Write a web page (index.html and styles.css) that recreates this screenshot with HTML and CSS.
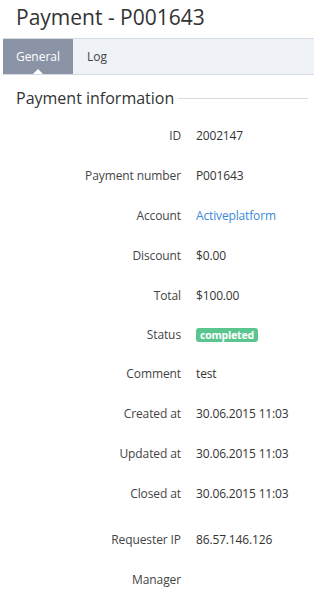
FILE: index.html
```html
<!DOCTYPE html>
<html>
<head>
<meta charset="utf-8">
<link rel="stylesheet" href="styles.css">
</head>
<body>
<h1 class="title">Payment - P001643</h1>

<div class="tabs">
    <div class="tab active">General</div>
    <div class="tab">Log</div>
</div>

<div class="section">
    <h2 class="section-head"><span>Payment information</span></h2>
    <div class="rows">
        <div class="row"><div class="label">ID</div><div class="value">2002147</div></div>
        <div class="row"><div class="label">Payment number</div><div class="value">P001643</div></div>
        <div class="row"><div class="label">Account</div><div class="value"><a href="#">Activeplatform</a></div></div>
        <div class="row"><div class="label">Discount</div><div class="value">$0.00</div></div>
        <div class="row"><div class="label">Total</div><div class="value">$100.00</div></div>
        <div class="row short"><div class="label">Status</div><div class="value"><span class="badge">completed</span></div></div>
        <div class="row"><div class="label">Comment</div><div class="value">test</div></div>
        <div class="row"><div class="label">Created at</div><div class="value">30.06.2015 11:03</div></div>
        <div class="row"><div class="label">Updated at</div><div class="value">30.06.2015 11:03</div></div>
        <div class="row"><div class="label">Closed at</div><div class="value">30.06.2015 11:03</div></div>
        <div class="row gap"><div class="label">Requester IP</div><div class="value">86.57.146.126</div></div>
        <div class="row"><div class="label">Manager</div><div class="value"></div></div>
    </div>
</div>
</body>
</html>
```

FILE: styles.css
```css
body {
    margin: 0;
    font-family: "Open Sans", "Noto Sans", sans-serif;
    font-size: 12px;
    color: #333;
    background: #fff;
}
.title {
    margin: 0;
    padding: 2px 16px 0;
    height: 36px;
    font-size: 21px;
    font-weight: normal;
    line-height: 30px;
    color: #333;
}
.tabs {
    display: flex;
    margin-left: 3px;
    height: 35px;
    background: #eff2f6;
    border-top: 1px solid #d6dce3;
    border-bottom: 1px solid #d6dce3;
}
.tab {
    position: relative;
    padding: 0 14px;
    line-height: 35px;
    font-size: 12px;
    color: #444;
}
.tab.active {
    width: 70px;
    box-sizing: border-box;
    padding: 0;
    text-align: center;
    background: #8a94a6;
    color: #fff;
}
.tab.active::after {
    content: "";
    position: absolute;
    left: 30px;
    bottom: 0;
    border-left: 5px solid transparent;
    border-right: 5px solid transparent;
    border-bottom: 5px solid #fff;
}
.section {
    padding: 0 6px 0 16px;
}
.section-head {
    display: flex;
    align-items: center;
    margin: 12px 0 0;
    font-size: 16px;
    font-weight: normal;
    line-height: 22px;
    color: #333;
}
.section-head::after {
    content: "";
    flex: 1;
    margin-left: 4px;
    border-top: 1px solid #d6dce3;
}
.rows {
    padding-top: 6px;
}
.row {
    display: flex;
    height: 40px;
    align-items: center;
}
.row.short {
    height: 38px;
}
.row.gap {
    margin-top: 6px;
}
.label {
    width: 165px;
    text-align: right;
    color: #444;
    letter-spacing: -0.1px;
}
.value {
    padding-left: 15px;
    color: #333;
    letter-spacing: -0.15px;
}
.value a {
    color: #3a8ad6;
    text-decoration: none;
}
.badge {
    display: inline-block;
    padding: 0 4px;
    border-radius: 3px;
    background: #5bc58f;
    color: #fff;
    font-weight: bold;
    font-size: 10.5px;
    line-height: 14px;
    letter-spacing: -0.2px;
}
```
